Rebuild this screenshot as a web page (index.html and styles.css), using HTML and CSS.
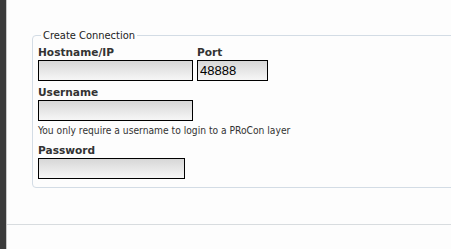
FILE: index.html
```html
<!DOCTYPE html>
<html>
<head>
<meta charset="utf-8">
<link rel="stylesheet" href="styles.css">
</head>
<body>
<div class="sidebar"></div>
<div class="panel">
  <div class="content">
    <fieldset class="box">
      <legend class="legend">Create Connection</legend>
      <div class="row">
        <div class="field">
          <label class="label">Hostname/IP</label>
          <input class="input wide" type="text">
        </div>
        <div class="field">
          <label class="label">Port</label>
          <input class="input port" type="text" value="48888">
        </div>
      </div>
      <div class="field">
        <label class="label">Username</label>
        <input class="input wide" type="text">
        <div class="help">You only require a username to login to a PRoCon layer</div>
      </div>
      <div class="field">
        <label class="label">Password</label>
        <input class="input pass" type="password">
      </div>
    </fieldset>
  </div>
  <div class="footer"></div>
</div>
</body>
</html>
```
FILE: styles.css
```css
html, body {
  margin: 0;
  height: 100%;
}
body {
  display: flex;
  background: #fdfdfd;
  font-family: "DejaVu Sans Condensed", "DejaVu Sans", sans-serif;
  font-size: 11px;
  color: #222;
  overflow: hidden;
}
.sidebar {
  width: 6px;
  flex: none;
  background: #3b3b3b;
  border-right: 1px solid #c8c8c8;
}
.panel {
  flex: 1;
  overflow: hidden;
  background: #fdfdfd;
}
.content {
  height: 225px;
  padding-top: 30px;
  box-sizing: border-box;
  border-bottom: 1px solid #d8dcdf;
}
.box {
  margin: 0 0 0 25px;
  width: 600px;
  border: 1px solid #d3dce5;
  border-radius: 4px;
  padding: 0 0 8px 5px;
}
.legend {
  margin-left: 3px;
  padding: 0 2px;
  color: #222;
  font-size: 11px;
  line-height: 11px;
}
.row {
  display: flex;
  gap: 4px;
}
.field {
  display: flex;
  flex-direction: column;
}
.label {
  font-family: "DejaVu Sans", sans-serif;
  font-weight: bold;
  font-size: 10.6px;
  color: #333;
  height: 13px;
  line-height: 13px;
  margin-top: 5px;
  margin-bottom: 1px;
}
.row .label {
  margin-top: 5px;
}
.input {
  box-sizing: border-box;
  height: 21px;
  border: 1px solid #000;
  border-radius: 0;
  background: linear-gradient(#d7d7d7, #f6f6f6);
  padding: 0 2px;
  margin: 0;
  font-family: "Liberation Sans", Arial, sans-serif;
  font-size: 13px;
  color: #000;
}
.wide { width: 155px; }
.port { width: 71px; }
.pass { width: 147px; }
.help {
  color: #333;
  font-size: 10.2px;
  line-height: 12px;
  height: 12px;
  margin-top: 4px;
  margin-bottom: 2px;
}
.footer {
  height: 24px;
}
```
